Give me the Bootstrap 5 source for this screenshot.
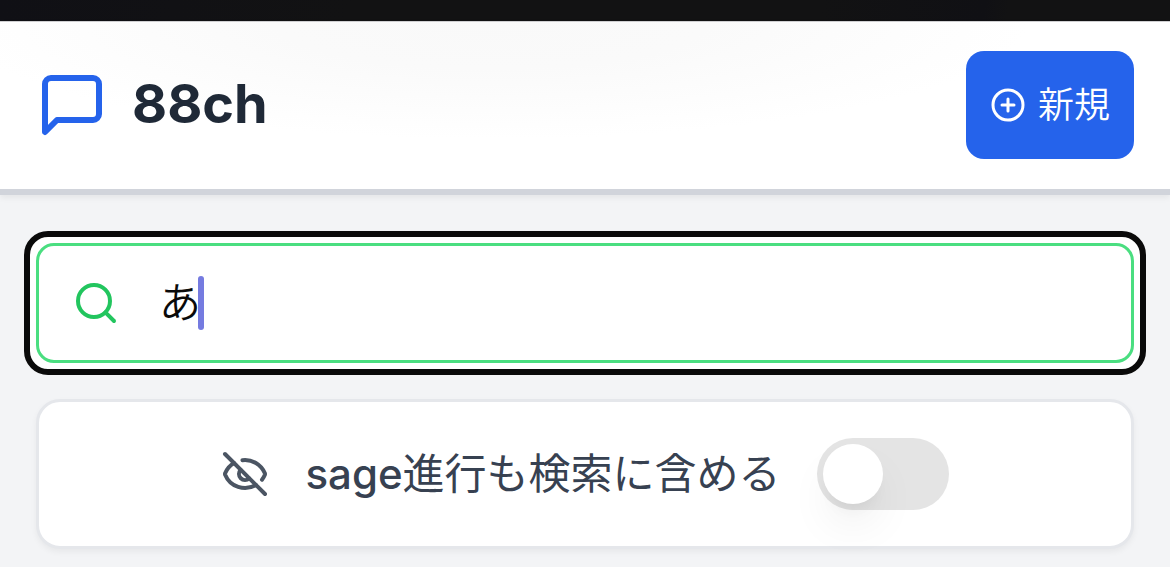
<!DOCTYPE html>
<html lang="ja">
<head>
<meta charset="utf-8">
<meta name="viewport" content="width=device-width, initial-scale=1">
<title>88ch</title>
<link href="https://cdn.jsdelivr.net/npm/bootstrap@5.3.0/dist/css/bootstrap.min.css" rel="stylesheet">
<style>
body { background: #f3f4f6; font-family: Inter, "Noto Sans CJK JP", sans-serif; }
.status-strip { height: 21px; background: linear-gradient(100deg, #101015, #121213 30%, #121213 70%, #101014 84%, #121213 86%); }
.site-header {
  padding: 29px 36px 30px;
  border-top: 1px solid #cfcfd1;
  border-bottom: 6px solid #d1d4db;
  background: radial-gradient(ellipse 46% 70% at 42% 0, #f9f9f9, #fafafa 40%, #fff) #fff;
  box-shadow: 0 3px 6px rgba(0, 0, 0, .06);
}
.brand { gap: 24px; color: #1f2937; }
.brand h1 { font-size: 54px; line-height: 70px; font-weight: 700; padding-bottom: 2px; }
.icon { fill: none; stroke: currentColor; stroke-width: 2; stroke-linecap: round; stroke-linejoin: round; flex: none; }
.icon-brand { color: #2563eb; }
.btn-new {
  --bs-btn-color: #fff; --bs-btn-bg: #2563eb; --bs-btn-hover-color: #fff; --bs-btn-hover-bg: #1d4ed8;
  --bs-btn-border-width: 0; --bs-btn-border-radius: 18px;
  gap: 12px; padding: 27px 24px; font-size: 36px; line-height: 54px; font-weight: 350;
}
main { padding: 36px 24px 18px; }
.search-ring { padding: 6px; border: 6px solid #0a0a0a; border-radius: 24px; background: #fff; }
.search-icon { left: 42px; top: 42px; color: #22c55e; }
.search-input, .search-input:focus {
  height: 120px; padding: 0 36px 8px 120px; font-size: 42px; font-weight: 350; color: #0a0a0a;
  border: 3px solid #4ade80; border-radius: 18px; background: #fff; box-shadow: none;
}
.text-caret { left: 168px; top: 39px; width: 6px; height: 54px; border-radius: 3px; background: #757be0; }
.option-card {
  gap: 36px; margin: 24px 12px 0; padding: 36px; background: #fff; color: #374151;
  border: 3px solid #e5e7eb; border-radius: 24px; box-shadow: 0 3px 6px rgba(0, 0, 0, .05);
}
.option-label { gap: 36px; font-size: 42px; line-height: 72px; font-weight: 400; }
.option-label .latin { font-weight: 500; }
.option-label .icon { color: #4b5563; }
.toggle {
  appearance: none; width: 132px; height: 72px; padding: 6px; margin: 0; flex: none;
  border-radius: 36px; background: #e4e4e4;
}
.toggle::before {
  content: ""; display: block; width: 60px; height: 60px; border-radius: 50%; background: #fff;
  box-shadow: 0 24px 45px -6px rgba(0, 0, 0, .08), 0 12px 18px -12px rgba(0, 0, 0, .1);
}
.toggle:checked { background: #2563eb; }
.toggle:checked::before { margin-left: 60px; }
</style>
</head>
<body>
<div class="status-strip"></div>
<header class="site-header d-flex align-items-center justify-content-between">
  <div class="brand d-flex align-items-center">
    <svg class="icon icon-brand" width="72" height="72" viewBox="0 0 24 24" aria-hidden="true"><path d="M21 15a2 2 0 0 1-2 2H7l-4 4V5a2 2 0 0 1 2-2h14a2 2 0 0 1 2 2z"/></svg>
    <h1 class="m-0">88ch</h1>
  </div>
  <button type="button" class="btn btn-new d-flex align-items-center">
    <svg class="icon" width="36" height="36" viewBox="0 0 24 24" aria-hidden="true"><circle cx="12" cy="12" r="10"/><path d="M8 12h8M12 8v8"/></svg>
    <span>新規</span>
  </button>
</header>
<main>
  <div class="search-ring position-relative">
    <input type="text" class="form-control search-input" value="あ" aria-label="検索">
    <svg class="icon search-icon position-absolute" width="48" height="48" viewBox="0 0 24 24" aria-hidden="true"><circle cx="11" cy="11" r="8"/><path d="m21 21-4.3-4.3"/></svg>
    <span class="text-caret position-absolute"></span>
  </div>
  <div class="option-card d-flex align-items-center justify-content-center">
    <label class="option-label d-flex align-items-center" for="include-sage">
      <svg class="icon" width="48" height="48" viewBox="0 0 24 24" aria-hidden="true"><path d="M10.733 5.076a10.744 10.744 0 0 1 11.205 6.575 1 1 0 0 1 0 .696 10.747 10.747 0 0 1-1.444 2.49"/><path d="M14.084 14.158a3 3 0 0 1-4.242-4.242"/><path d="M17.479 17.499a10.75 10.75 0 0 1-15.417-5.151 1 1 0 0 1 0-.696 10.75 10.75 0 0 1 4.446-5.143"/><path d="m2 2 20 20"/></svg>
      <span><span class="latin">sage</span>進行も検索に含める</span>
    </label>
    <input type="checkbox" role="switch" class="toggle" id="include-sage">
  </div>
</main>
<script src="https://cdn.jsdelivr.net/npm/bootstrap@5.3.0/dist/js/bootstrap.bundle.min.js"></script>
</body>
</html>
